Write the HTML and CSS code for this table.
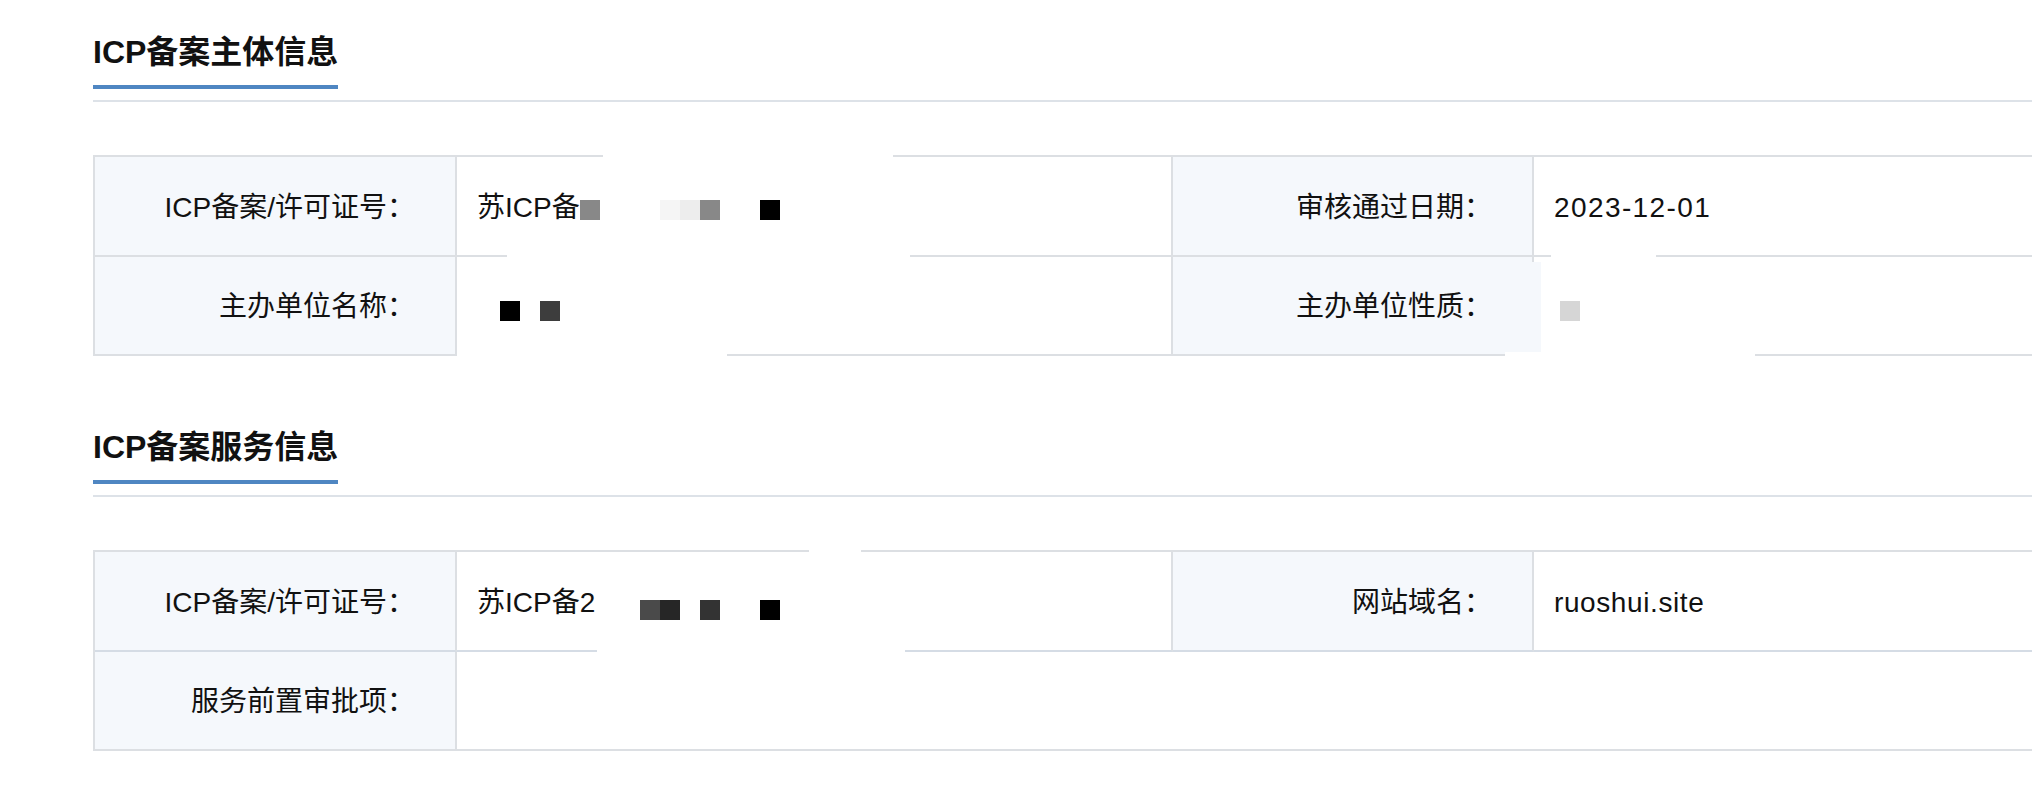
FILE: index.html
```html
<!DOCTYPE html>
<html lang="zh-CN">
<head>
<meta charset="utf-8">
<title>ICP备案信息</title>
<link rel="stylesheet" href="styles.css">
</head>
<body>
<main class="page">
  <section class="sec">
    <div class="sec-head"><h2 class="sec-title">ICP备案主体信息</h2></div>
    <div class="info-table">
      <div class="cell label">ICP备案/许可证号：</div>
      <div class="cell value">苏ICP备
        <span class="mosaic m-t1r1"><i class="px g88"></i><i class="px"></i><i class="px"></i><i class="px"></i><i class="px gf5"></i><i class="px gee"></i><i class="px g88"></i><i class="px"></i><i class="px"></i><i class="px g00"></i></span>
      </div>
      <div class="cell label">审核通过日期：</div>
      <div class="cell value latin date">2023-12-01</div>

      <div class="cell label">主办单位名称：</div>
      <div class="cell value">
        <span class="mosaic m-t1r2a"><i class="px g00"></i><i class="px"></i><i class="px g3d"></i></span>
      </div>
      <div class="cell label">主办单位性质：</div>
      <div class="cell value">
        <span class="mosaic m-t1r2b"><i class="px gd6"></i></span>
      </div>

      <span class="patch p1-top"></span>
      <span class="patch p1-mid"></span>
      <span class="patch p1-bot"></span>
      <span class="patch p1-botr"></span>
      <span class="patch p1-midr"></span>
      <span class="patch tint p1-vr"></span>
    </div>
  </section>

  <section class="sec">
    <div class="sec-head"><h2 class="sec-title">ICP备案服务信息</h2></div>
    <div class="info-table t2">
      <div class="cell label">ICP备案/许可证号：</div>
      <div class="cell value">苏ICP备2
        <span class="mosaic m-t2r1"><i class="px g4a"></i><i class="px g26"></i><i class="px"></i><i class="px g33"></i><i class="px"></i><i class="px"></i><i class="px g00"></i></span>
      </div>
      <div class="cell label">网站域名：</div>
      <div class="cell value latin">ruoshui.site</div>

      <div class="cell label">服务前置审批项：</div>
      <div class="cell value span3"></div>

      <span class="patch p2-top"></span>
      <span class="patch p2-mid"></span>
    </div>
  </section>
</main>
</body>
</html>
```
FILE: styles.css
```css
* { box-sizing: border-box; }
html, body { margin: 0; padding: 0; background: #fff; }
body {
  font-family: "Liberation Sans", "Noto Sans CJK SC", sans-serif;
  color: #111;
  overflow: hidden;
}
.page {
  padding: 32px 0 0 93px;
  width: 2032px;
  overflow: hidden;
}
.sec { margin-bottom: 71px; }
.sec-head {
  display: flex;
  align-items: flex-start;
  padding-bottom: 11px;
  border-bottom: 2px solid #dde2e8;
  margin-right: -40px;
}
.sec-title {
  margin: 0;
  font-size: 32px;
  line-height: 40px;
  font-weight: 700;
  color: #111;
  padding-bottom: 13px;
  border-bottom: 4px solid #4f86c2;
}
.info-table {
  position: relative;
  margin-top: 53px;
  margin-right: -60px;
  display: grid;
  grid-template-columns: 362px 716px 361px 1fr;
  grid-auto-rows: 99.5px;
  border-top: 2px solid #dcdfe3;
  border-left: 2px solid #dcdfe3;
}
.cell {
  position: relative;
  display: flex;
  align-items: center;
  font-size: 28px;
  line-height: 34px;
  padding-top: 4px;
  border-right: 2px solid #dcdfe3;
  border-bottom: 2px solid #dcdfe3;
}
.label {
  justify-content: flex-end;
  background: #f5f8fc;
  padding-right: 40px;
}
.value { padding-left: 20px; }
.latin { letter-spacing: 0.6px; }
.date { letter-spacing: 1.4px; }
.span3 { grid-column: span 3; }
.t2 .cell:nth-child(-n+4) { border-bottom-color: #d5dce5; }

.mosaic { position: absolute; display: flex; }
.px { display: block; width: 20px; height: 20px; }
.g00 { background: #000; }
.g26 { background: #262626; }
.g33 { background: #333; }
.g3d { background: #3d3d3d; }
.g4a { background: #4a4a4a; }
.g88 { background: #888; }
.gd6 { background: #d6d6d6; }
.gee { background: #ededed; }
.gf5 { background: #f5f5f5; }
.m-t1r1 { left: 123px; top: 43px; }
.m-t1r2a { left: 43px; top: 44px; }
.m-t1r2b { left: 26px; top: 44px; }
.m-t2r1 { left: 183px; top: 48px; }

.patch { position: absolute; background: #fff; }
.patch.tint { background: #f5f8fc; }
.p1-top { left: 508px; top: -7px; width: 290px; height: 12px; }
.p1-mid { left: 412px; top: 93px; width: 403px; height: 12px; }
.p1-bot { left: 362px; top: 193px; width: 270px; height: 12px; }
.p1-botr { left: 1410px; top: 195px; width: 250px; height: 10px; }
.p1-midr { left: 1456px; top: 94px; width: 105px; height: 10px; }
.p1-vr { left: 1436px; top: 105px; width: 10px; height: 90px; }
.p2-top { left: 714px; top: -7px; width: 52px; height: 11px; }
.p2-mid { left: 502px; top: 94px; width: 308px; height: 11px; }
```
